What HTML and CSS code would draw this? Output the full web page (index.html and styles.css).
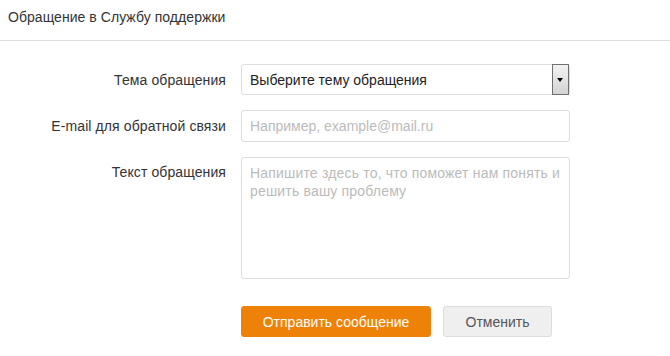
FILE: index.html
```html
<!DOCTYPE html>
<html lang="ru">
<head>
    <meta charset="UTF-8">
    <title>Обращение в Службу поддержки</title>
    <link rel="stylesheet" href="styles.css">
</head>
<body>
    <div class="dialog">
        <div class="dialog-header">Обращение в Службу поддержки</div>

        <form class="support-form">
            <div class="form-row">
                <label class="form-label">Тема обращения</label>
                <div class="select">
                    <span class="select-value">Выберите тему обращения</span>
                    <span class="select-arrow"></span>
                </div>
            </div>

            <div class="form-row">
                <label class="form-label">E-mail для обратной связи</label>
                <input class="input" type="text" placeholder="Например, example@mail.ru">
            </div>

            <div class="form-row form-row-top">
                <label class="form-label">Текст обращения</label>
                <textarea class="textarea" placeholder="Напишите здесь то, что поможет нам понять и решить вашу проблему"></textarea>
            </div>

            <div class="form-row form-actions">
                <span></span>
                <div class="btn-group">
                    <button type="button" class="btn btn-primary">Отправить сообщение</button>
                    <button type="button" class="btn btn-secondary">Отменить</button>
                </div>
            </div>
        </form>
    </div>
</body>
</html>
```

FILE: styles.css
```css
* {
    box-sizing: border-box;
    margin: 0;
    padding: 0;
}

body {
    font-family: 'Liberation Sans', Arial, sans-serif;
    font-size: 14px;
    color: #333;
    background: #fff;
}

.dialog {
    width: 670px;
}

.dialog-header {
    height: 41px;
    padding: 9px 8px 0;
    line-height: 17px;
    letter-spacing: 0.05px;
    border-bottom: 1px solid #ddd;
}

.support-form {
    padding-top: 23px;
}

.form-row {
    display: grid;
    grid-template-columns: 228px 329px;
    column-gap: 13px;
    align-items: center;
    margin-bottom: 15px;
}

.form-row-top {
    align-items: start;
}

.form-row-top .form-label {
    padding-top: 7px;
}

.form-label {
    text-align: right;
    padding-right: 2px;
    letter-spacing: 0.1px;
    color: #333;
}

.select {
    display: flex;
    align-items: center;
    height: 31px;
    border: 1px solid #ddd;
    border-radius: 3px;
    background: #fff;
}

.select-value {
    flex: 1;
    padding-left: 8px;
    color: #222;
}

.select-arrow {
    position: relative;
    width: 17px;
    height: 31px;
    margin-top: -1px;
    margin-bottom: -1px;
    border: 1px solid #707070;
    background: linear-gradient(#f2f2f2, #d4d4d4);
}

.select-arrow::after {
    content: '';
    position: absolute;
    left: 4px;
    top: 13px;
    border-left: 3.5px solid transparent;
    border-right: 3.5px solid transparent;
    border-top: 4px solid #000;
}

.input,
.textarea {
    width: 100%;
    border: 1px solid #ddd;
    border-radius: 3px;
    font-family: inherit;
    font-size: 14px;
    color: #333;
    padding: 0 8px;
    outline: none;
}

.input {
    height: 32px;
}

.textarea {
    height: 122px;
    padding: 6px 4px 6px 8px;
    line-height: 18px;
    letter-spacing: 0.18px;
    resize: none;
}

.input::placeholder,
.textarea::placeholder {
    color: #bbb;
}

.form-actions {
    margin-top: 27px;
}

.btn-group {
    display: flex;
    gap: 12px;
}

.btn {
    height: 31px;
    border-radius: 3px;
    font-family: inherit;
    font-size: 14px;
    cursor: pointer;
}

.btn-primary {
    width: 190px;
    background: #ee8208;
    border: 1px solid #ee8208;
    color: #fff;
}

.btn-secondary {
    width: 109px;
    background: #efefef;
    border: 1px solid #ddd;
    color: #555;
}
```
